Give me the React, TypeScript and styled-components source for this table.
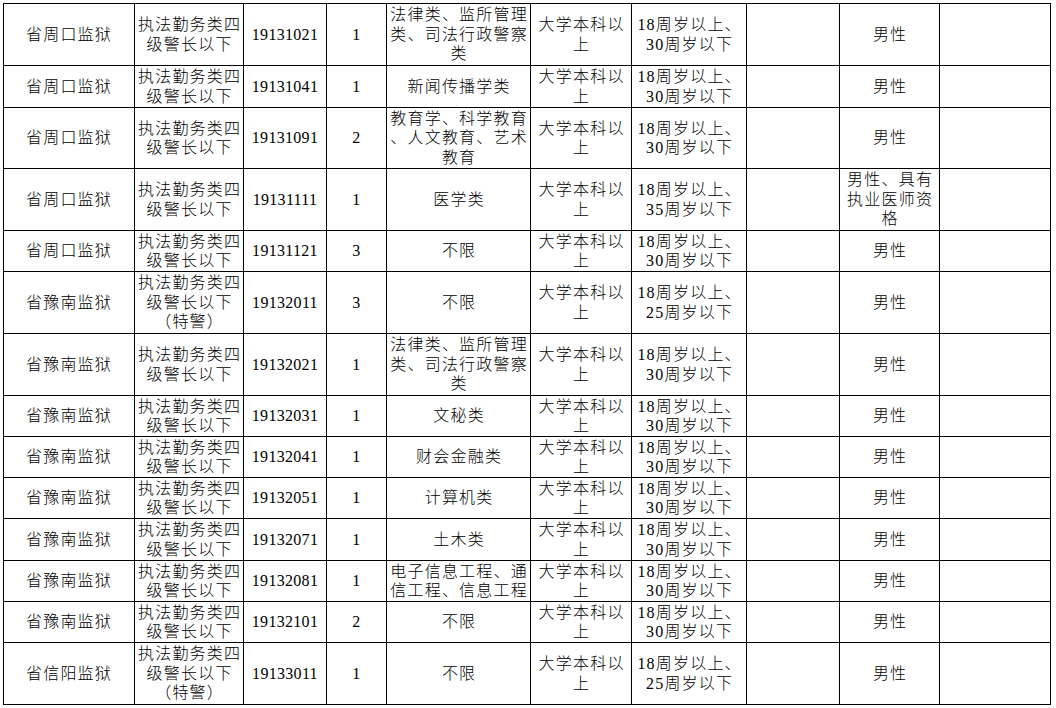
import styled, { createGlobalStyle } from "styled-components";

const GlobalStyle = createGlobalStyle`
  html, body {
    margin: 0;
    padding: 0;
    background: #ffffff;
  }
`;

const Page = styled.div`
  padding: 3px 0 0 3px;
  background: #ffffff;
`;

const Sheet = styled.table`
  border-collapse: collapse;
  table-layout: fixed;
  width: 1047px;
  font-family: "Liberation Serif", "Noto Sans CJK SC", serif;
  font-size: 16px;
  font-weight: 300;
  color: #000000;
`;

const Row = styled.tr<{ $h: number }>`
  height: ${(p) => p.$h}px;
`;

const Cell = styled.td<{ $num?: boolean }>`
  border: 1px solid #000000;
  padding: 0 2px;
  text-align: center;
  vertical-align: middle;
  line-height: 19.5px;
  white-space: nowrap;
  letter-spacing: ${(p) => (p.$num ? "0.3px" : "1.2px")};
`;

const Line = styled.span`
  display: block;
  margin-right: -1.2px;
`;

type Entry = {
  unit: string;
  post: string[];
  code: string;
  count: string;
  major: string[];
  edu: string[];
  age: string[];
  other: string[];
  h: number;
};

const POST = ["执法勤务类四", "级警长以下"];
const POST_SP = ["执法勤务类四", "级警长以下", "（特警）"];
const EDU = ["大学本科以", "上"];
const age = (max: string) => ["18周岁以上、", `${max}周岁以下`];
const LAW = ["法律类、监所管理", "类、司法行政警察", "类"];
const MALE = ["男性"];

const rows: Entry[] = [
  { unit: "省周口监狱", post: POST, code: "19131021", count: "1", major: LAW, edu: EDU, age: age("30"), other: MALE, h: 62 },
  { unit: "省周口监狱", post: POST, code: "19131041", count: "1", major: ["新闻传播学类"], edu: EDU, age: age("30"), other: MALE, h: 42 },
  { unit: "省周口监狱", post: POST, code: "19131091", count: "2", major: ["教育学、科学教育", "、人文教育、艺术", "教育"], edu: EDU, age: age("30"), other: MALE, h: 61 },
  { unit: "省周口监狱", post: POST, code: "19131111", count: "1", major: ["医学类"], edu: EDU, age: age("35"), other: ["男性、具有", "执业医师资", "格"], h: 62 },
  { unit: "省周口监狱", post: POST, code: "19131121", count: "3", major: ["不限"], edu: EDU, age: age("30"), other: MALE, h: 41 },
  { unit: "省豫南监狱", post: POST_SP, code: "19132011", count: "3", major: ["不限"], edu: EDU, age: age("25"), other: MALE, h: 62 },
  { unit: "省豫南监狱", post: POST, code: "19132021", count: "1", major: LAW, edu: EDU, age: age("30"), other: MALE, h: 62 },
  { unit: "省豫南监狱", post: POST, code: "19132031", count: "1", major: ["文秘类"], edu: EDU, age: age("30"), other: MALE, h: 41 },
  { unit: "省豫南监狱", post: POST, code: "19132041", count: "1", major: ["财会金融类"], edu: EDU, age: age("30"), other: MALE, h: 41 },
  { unit: "省豫南监狱", post: POST, code: "19132051", count: "1", major: ["计算机类"], edu: EDU, age: age("30"), other: MALE, h: 41 },
  { unit: "省豫南监狱", post: POST, code: "19132071", count: "1", major: ["土木类"], edu: EDU, age: age("30"), other: MALE, h: 42 },
  { unit: "省豫南监狱", post: POST, code: "19132081", count: "1", major: ["电子信息工程、通", "信工程、信息工程"], edu: EDU, age: age("30"), other: MALE, h: 41 },
  { unit: "省豫南监狱", post: POST, code: "19132101", count: "2", major: ["不限"], edu: EDU, age: age("30"), other: MALE, h: 41 },
  { unit: "省信阳监狱", post: POST_SP, code: "19133011", count: "1", major: ["不限"], edu: EDU, age: age("25"), other: MALE, h: 62 },
];

const widths = [131, 109, 83, 60, 144, 101, 115, 93, 100, 111];

const Lines = ({ items }: { items: string[] }) => (
  <>
    {items.map((t, i) => (
      <Line key={i}>{t}</Line>
    ))}
  </>
);

const App = () => {
  return (
    <Page>
      <GlobalStyle />
      <Sheet>
        <colgroup>
          {widths.map((w, i) => (
            <col key={i} style={{ width: w }} />
          ))}
        </colgroup>
        <tbody>
          {rows.map((r, i) => (
            <Row key={i} $h={r.h}>
              <Cell>{r.unit}</Cell>
              <Cell>
                <Lines items={r.post} />
              </Cell>
              <Cell $num>{r.code}</Cell>
              <Cell $num>{r.count}</Cell>
              <Cell>
                <Lines items={r.major} />
              </Cell>
              <Cell>
                <Lines items={r.edu} />
              </Cell>
              <Cell>
                <Lines items={r.age} />
              </Cell>
              <Cell />
              <Cell>
                <Lines items={r.other} />
              </Cell>
              <Cell />
            </Row>
          ))}
        </tbody>
      </Sheet>
    </Page>
  );
};

export default App;
